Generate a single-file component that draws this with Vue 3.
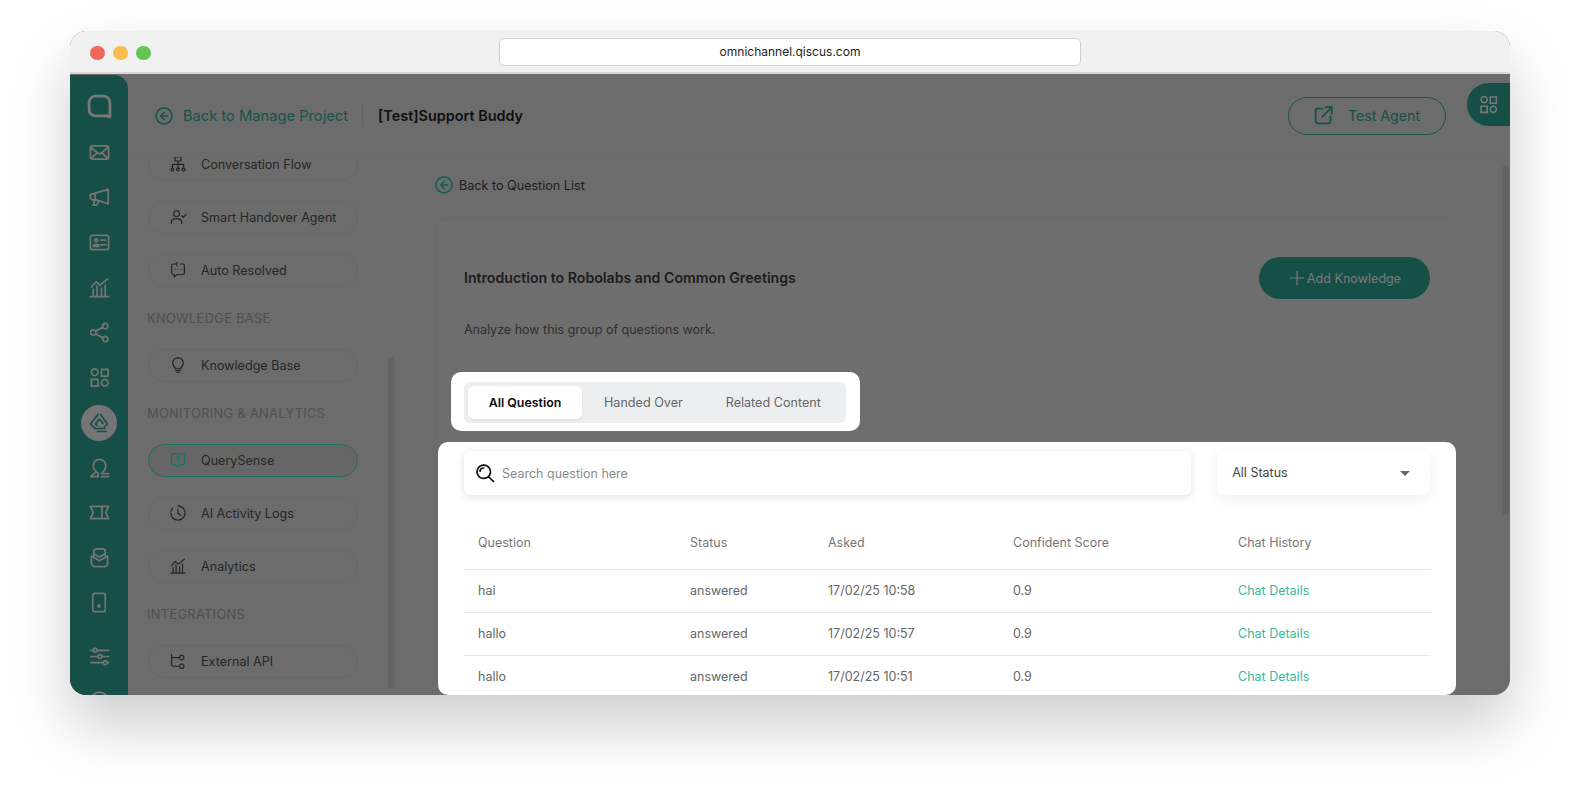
<script setup>
const railIcons = [
  { k: 'mail', d: 'M4.500 5h15a2 2 0 0 1 2 2v10a2 2 0 0 1-2 2h-15a2 2 0 0 1-2-2V7a2 2 0 0 1 2-2zM3 6.500l7 6a3 3 0 0 0 4 0l7-6M3.500 18l6-5.500M20.500 18l-6-5.500' },
  { k: 'megaphone', d: 'M2.500 9 21 3.500V18.500L8.500 14.500H5A2.500 2.500 0 0 1 2.500 12zM7.500 9v5M7 14.500 5.500 20H9l2.500-4.500' },
  { k: 'id', d: 'M4.500 4.500h15a2 2 0 0 1 2 2v11a2 2 0 0 1-2 2h-15a2 2 0 0 1-2-2v-11a2 2 0 0 1 2-2zM8.500 8.200a1.500 1.500 0 1 1-.01 0M5.500 16a3 2 0 0 1 6 0zM13.500 9.500h5M13.500 14.500h5' },
  { k: 'chart', d: 'M2.500 21.500h19M5.500 21v-7M9.500 21V10.500M14 21v-8M18 21V9.500M3.500 11.500l5-5.500 4 3.500 8-6.500' },
  { k: 'share', d: 'M5.500 9.200a2.800 2.800 0 1 1-.01 0M18 2.500a2.800 2.800 0 1 1-.01 0M18 16a2.800 2.800 0 1 1-.01 0M8 10.800l7.700-4.500M8 13.200l7.700 4.500' },
  { k: 'grid', d: 'M7 3a3.500 3.500 0 1 1-.01 0M14 3.500h7v7h-7zM3.500 14h7v7h-7zM17.500 14a3.500 3.500 0 1 1-.01 0' },
  { k: 'robo', active: true, d: 'M11 3.500 3.500 13l4.500 4.500M12 8.500 8.500 13l1.500 1.500M13.500 3.500 20.500 13l-3 3M12.800 8.500 16 12.500M8.500 17.500h9M10.500 20.500h8.500' },
  { k: 'person', d: 'M3 21.500h7.500v-3.500C8 16.500 5.500 14 5.500 10a6.500 6.500 0 0 1 13 0c0 3.500-1.500 5.500-3.500 7M3 21.500c1-2.500 3-3 4.500-4M14 18.500h7.500M14 21.500h7.500' },
  { k: 'ticket', d: 'M2.500 5.500h19L18.500 12l3 6.500h-19l3-6.500zM14.500 5.500v13' },
  { k: 'inbox', d: 'M6 10V6a3 3 0 0 1 3-3h6a3 3 0 0 1 3 3v4M3.500 10.500 12 15.500l8.500-5V18a3.500 3.500 0 0 1-3.500 3.500H7A3.500 3.500 0 0 1 3.500 18zM6 8l6 3.500L18 8' },
  { k: 'phone', d: 'M18 17.500V4.500a2 2 0 0 0-2-2H7a2 2 0 0 0-2 2v15a2 2 0 0 0 2 2h9a2 2 0 0 0 2-2M11.500 14.700a1 1 0 1 1-.01 0' },
  { k: 'sliders', gap: true, d: 'M3 5.500h2.500M9.500 5.500h12M7.500 3.500a2 2 0 1 1-.01 0M3 12h7.500M14.500 12h7M12.500 10a2 2 0 1 1-.01 0M3 18.500h13M20 18.500h1.500M18 16.500a2 2 0 1 1-.01 0' },
  { k: 'help', d: 'M12 2.500a9.500 9.500 0 1 1-.01 0' }
]

const flowIcon = 'M8 2.500h8v5.500H8zM12 8v9M4.500 17v-4.500h15V17M4.500 17.500a1.900 1.900 0 1 1-.01 0M12 17.500a1.900 1.900 0 1 1-.01 0M19.500 17.500a1.900 1.900 0 1 1-.01 0'

const menu = [
  { label: 'Conversation Flow', d: flowIcon },
  { label: 'Smart Handover Agent', d: 'M10 3.500a4 4 0 1 1-.01 0M3 20.500v-1.500a5 5 0 0 1 5-4.500h4a5 5 0 0 1 5 4.500v1.500M17 10.500l2 2 3.500-4' },
  { label: 'Auto Resolved', d: 'M9 4H5.500a2 2 0 0 0-2 2v10a2 2 0 0 0 2 2H7v3l4-3h7.500a2 2 0 0 0 2-2V6a2 2 0 0 0-2-2H15M11 2 9 4l2 2M8 11h.01M12 11h.01M16 11h.01' },
  { title: 'KNOWLEDGE BASE' },
  { label: 'Knowledge Base', d: 'M12 2.500a7 7 0 0 1 4 12.700V17H8v-1.800A7 7 0 0 1 12 2.500zM9 19.500h6M10.500 22h3' },
  { title: 'MONITORING & ANALYTICS' },
  { label: 'QuerySense', active: true, d: 'M5.500 3.500h13a2 2 0 0 1 2 2v11a2 2 0 0 1-2 2H15l-3 3-3-3H5.500a2 2 0 0 1-2-2v-11a2 2 0 0 1 2-2zM9.800 8.800a2.200 2.200 0 1 1 3.400 1.900c-.8.500-1.200 1-1.200 1.800M12 15h.01' },
  { label: 'AI Activity Logs', d: 'M12 2.500a9.500 9.500 0 1 1-9.500 9.500M2.800 9.500A9.500 9.500 0 0 1 5 5.500M12 7v5.500l3.500 2.500' },
  { label: 'Analytics', d: 'M2.500 21.500h19M5.500 21v-7M9.500 21V10.500M14 21v-8M18 21V9.500M3.500 11.500l5-5.500 4 3.500 8-6.500' },
  { title: 'INTEGRATIONS' },
  { label: 'External API', d: 'M3.500 3v14a2 2 0 0 0 2 2H13M3.500 7.500h9.500M17 4.500a3 3 0 1 1-.01 0M17 16a3 3 0 1 1-.01 0' }
]

const rows = [
  { q: 'hai', status: 'answered', asked: '17/02/25 10:58', score: '0.9' },
  { q: 'hallo', status: 'answered', asked: '17/02/25 10:57', score: '0.9' },
  { q: 'hallo', status: 'answered', asked: '17/02/25 10:51', score: '0.9' }
]
const gridIcon = 'M7 3a3.500 3.500 0 1 1-.01 0M14 3.500h7v7h-7zM3.500 14h7v7h-7zM17.500 14a3.500 3.500 0 1 1-.01 0'
const backIcon = 'M12 2.500a9.500 9.500 0 1 1-.01 0M12.500 7.500 8 12l4.500 4.500M8 12h8.500'
</script>

<template>
  <div class="stage">
    <div class="window">
      <div class="titlebar">
        <div class="dots"><i class="dot red"></i><i class="dot yellow"></i><i class="dot green"></i></div>
        <div class="url">omnichannel.qiscus.com</div>
      </div>
      <div class="app">
        <nav class="rail">
          <div class="rail-item first">
            <svg class="logo" viewBox="0 0 24 24"><path d="M8 2h8a6 6 0 0 1 6 6v14l-3-1H8a6 6 0 0 1-6-6V8a6 6 0 0 1 6-6z" /></svg>
          </div>
          <div v-for="ic in railIcons" :key="ic.k" class="rail-item" :class="{ on: ic.active, gap: ic.gap }">
            <svg viewBox="0 0 24 24"><path :d="ic.d" /></svg>
          </div>
        </nav>
        <div class="content">
          <header class="top">
            <a class="back">
              <svg viewBox="0 0 24 24"><path :d="backIcon" /></svg>
              <span>Back to Manage Project</span>
            </a>
            <span class="divider"></span>
            <strong class="crumb">[Test]Support Buddy</strong>
            <button class="test">
              <svg viewBox="0 0 24 24"><path d="M11 4H5.500A2.500 2.500 0 0 0 3 6.500v12A2.500 2.500 0 0 0 5.500 21h12a2.500 2.500 0 0 0 2.500-2.500V13M10.500 13.500 21.500 2.500M14 2.500h7.500V10" /></svg>
              <span>Test Agent</span>
            </button>
            <div class="fab"><svg viewBox="0 0 24 24"><path :d="gridIcon" /></svg></div>
          </header>
          <div class="body">
            <aside class="panel">
              <div class="menu">
                <template v-for="m in menu" :key="m.label || m.title">
                  <div v-if="m.title" class="section">{{ m.title }}</div>
                  <div v-else class="pill" :class="{ active: m.active }">
                    <svg viewBox="0 0 24 24"><path :d="m.d" /></svg>
                    <span>{{ m.label }}</span>
                  </div>
                </template>
              </div>
              <div class="panel-scroll"></div>
            </aside>
            <main class="main">
              <a class="back-list">
                <svg viewBox="0 0 24 24"><path :d="backIcon" /></svg>
                <span>Back to Question List</span>
              </a>
              <section class="card">
                <div class="card-head">
                  <h1>Introduction to Robolabs and Common Greetings</h1>
                  <button class="add">
                    <svg viewBox="0 0 24 24"><path d="M12 3v18M3 12h18" /></svg>
                    <span>Add Knowledge</span>
                  </button>
                </div>
                <p class="sub">Analyze how this group of questions work.</p>
                <div class="tabs-hl">
                  <div class="tabs">
                    <div class="tab on">All Question</div>
                    <div class="tab t2">Handed Over</div>
                    <div class="tab t3">Related Content</div>
                  </div>
                </div>
                <div class="panel-white">
                  <div class="filters">
                    <div class="search">
                      <svg viewBox="0 0 24 24"><path d="M10.500 2.500a8 8 0 1 1-.01 0M16.500 16.500 22 22M6 10a4.500 4.500 0 0 1 4.500-4" /></svg>
                      <span>Search question here</span>
                    </div>
                    <div class="select"><span>All Status</span><i class="caret"></i></div>
                  </div>
                  <table>
                    <thead>
                      <tr><th class="c1">Question</th><th class="c2">Status</th><th class="c3">Asked</th><th class="c4">Confident Score</th><th>Chat History</th></tr>
                    </thead>
                    <tbody>
                      <tr v-for="(r, i) in rows" :key="i">
                        <td>{{ r.q }}</td><td>{{ r.status }}</td><td>{{ r.asked }}</td><td>{{ r.score }}</td><td class="link">Chat Details</td>
                      </tr>
                    </tbody>
                  </table>
                </div>
              </section>
              <div class="main-scroll"></div>
            </main>
          </div>
        </div>
      </div>
    </div>
  </div>
</template>

<style>
html, body { margin: 0; background: #fff; overflow: hidden; }
</style>

<style scoped>
* { box-sizing: border-box; }
.stage { width: 1580px; height: 804px; padding: 31px 70px 0; font-family: Inter, "Liberation Sans", sans-serif; overflow: hidden; background: #fff; }
.window { width: 1440px; height: 664px; border-radius: 16px; overflow: hidden; box-shadow: 0 30px 60px rgba(0,0,0,.2); background: #6c6c6c; display: flex; flex-direction: column; }
.titlebar { height: 43px; flex: none; background: #f1f1f1; border-bottom: 2px solid #d9d9d9; position: relative; display: flex; align-items: center; justify-content: center; }
.dots { position: absolute; left: 20px; top: 14.500px; display: flex; gap: 8.500px; }
.dot { width: 14.500px; height: 14.500px; border-radius: 50%; display: block; }
.red { background: #f2685f; } .yellow { background: #f7bd4f; } .green { background: #62c554; }
.url { width: 582px; height: 28px; margin-top: 1px; background: #fff; border: 1px solid #cfcfcf; border-radius: 5px; text-align: center; font-size: 12px; line-height: 26px; color: #222; }
.app { flex: 1; display: flex; min-height: 0; }
.rail { width: 58px; flex: none; background: #154f47; border-radius: 0 14px 0 14px; margin-top: 1px; padding-top: 9px; display: flex; flex-direction: column; align-items: center; overflow: hidden; position: relative; z-index: 2; }
.rail-item { height: 45px; width: 58px; flex: none; display: flex; align-items: center; justify-content: center; }
.rail-item.first { margin-bottom: 1px; }
.rail-item svg { width: 23px; height: 23px; fill: none; stroke: #757575; stroke-width: 1.800; stroke-linejoin: round; stroke-linecap: round; }
.rail-item .logo { width: 25px; height: 25px; stroke-width: 2.700; stroke: #787878; }
.rail-item.on { position: relative; }
.rail-item.on::before { content: ""; position: absolute; width: 36px; height: 36px; left: 11px; top: 4.500px; border-radius: 50%; background: #757575; }
.rail-item.on svg { position: relative; stroke: #154f47; width: 24px; height: 24px; stroke-width: 1.700; }
.rail-item.gap { margin-top: 9px; }
.content { flex: 1; min-width: 0; display: flex; flex-direction: column; }
.top { height: 83px; flex: none; display: flex; align-items: center; padding-left: 26px; border-bottom: 1px solid #696969; position: relative; padding-top: 0; }
.back { display: flex; align-items: center; gap: 9px; color: #16544a; font-size: 14.700px; width: 208px; margin-top: 1px; }
.back svg { width: 20px; height: 20px; fill: none; stroke: #16544a; stroke-width: 1.800; stroke-linecap: round; stroke-linejoin: round; }
.divider { width: 1px; height: 23px; background: #636363; }
.crumb { margin-left: 15px; font-size: 14.400px; font-weight: 600; color: #0f0f0f; margin-top: 0; }
.test { position: absolute; left: 1160px; top: 23px; width: 158px; height: 38px; border-radius: 19px; border: 1px solid #16544a; background: transparent; display: flex; align-items: center; justify-content: center; gap: 14px; color: #14504a; font: 14.200px Inter, sans-serif; padding: 0 1px 1px 0; }
.test svg { width: 21px; height: 21px; fill: none; stroke: #14504a; stroke-width: 2; stroke-linecap: round; stroke-linejoin: round; }
.fab { position: absolute; right: 0; top: 9px; width: 43px; height: 43px; border-radius: 22px 0 0 22px; background: #154f47; display: flex; align-items: center; justify-content: center; }
.fab svg { width: 21px; height: 21px; fill: none; stroke: #787878; stroke-width: 1.800; }
.body { flex: 1; display: flex; min-height: 0; }
.panel { width: 267px; flex: none; overflow: hidden; position: relative; border-right: 1px solid #6a6a6a; }
.menu { margin-top: -9px; padding-left: 20px; display: flex; flex-direction: column; gap: 20px; }
.section { height: 22px; line-height: 22px; font-size: 12.800px; letter-spacing: .35px; color: #505050; margin-left: -1px; position: relative; top: 1px; white-space: nowrap; }
.pill { width: 210px; height: 33px; flex: none; border-radius: 17px; border: 1px solid #666; display: flex; align-items: center; padding: 0 0 1px 20px; font-size: 12.600px; color: #262626; white-space: nowrap; }
.pill svg { width: 18px; height: 18px; margin-right: 14px; fill: none; stroke: #232323; stroke-width: 1.600; stroke-linecap: round; stroke-linejoin: round; flex: none; }
.pill.active { border-color: #17705f; background: #666; }
.pill.active svg { stroke: #0f7560; }
.panel-scroll { position: absolute; left: 260px; top: 200px; width: 6px; height: 331px; border-radius: 3px; background: #636363; }
.main { flex: 1; min-width: 0; position: relative; padding-left: 43px; }
.back-list { display: flex; align-items: center; gap: 5px; height: 56px; margin-left: -4px; color: #1c1c1c; font-size: 12.600px; }
.back-list svg { width: 20px; height: 20px; fill: none; stroke: #14604f; stroke-width: 1.800; stroke-linecap: round; stroke-linejoin: round; }
.card { margin-top: 8px; width: 1018px; height: 600px; background: #6e6e6e; border-radius: 6px; padding: 36px 26px 0; box-shadow: 0 0 0 1px #6a6a6a; }
.card-head { display: flex; align-items: center; justify-content: space-between; height: 42px; }
h1 { margin: 0 0 2px; font-size: 14.150px; font-weight: 600; color: #1c1c1c; }
.add { width: 171px; height: 42px; border: 0; border-radius: 21px; background: #154f47; color: #7b7b7b; font: 12.600px Inter, sans-serif; display: flex; align-items: center; justify-content: center; gap: 1px; padding: 0; }
.add svg { width: 18px; height: 18px; fill: none; stroke: #7b7b7b; stroke-width: 1.600; stroke-linecap: round; }
.sub { margin: 21px 0 0; height: 20px; line-height: 20px; font-size: 12.500px; color: #2f2f2f; }
.tabs-hl { margin: 32px 0 0 -13px; width: 409px; height: 59px; background: #fff; border-radius: 10px; padding: 10px 13px; }
.tabs { width: 382px; height: 41px; background: #eceef0; border-radius: 6px; padding: 4px; display: flex; align-items: center; font-size: 12.600px; color: #666; }
.tab { height: 33px; line-height: 33px; white-space: nowrap; }
.tab.on { width: 114px; background: #fff; border-radius: 6px; text-align: center; font-weight: 600; font-size: 12.400px; color: #0a0a0a; box-shadow: 0 1px 3px rgba(0,0,0,.08); }
.t2 { margin-left: 22px; }
.t3 { margin-left: 43px; }
.panel-white { margin: 11px -26px 0; height: 253px; background: #fff; border-radius: 10px; padding: 9px 26px 0; }
.filters { display: flex; gap: 26px; height: 44px; }
.search { width: 728px; background: #fff; border-radius: 6px; box-shadow: 0 2px 8px rgba(0,0,0,.12); display: flex; align-items: center; padding-left: 11px; color: #8a8a8a; font-size: 12.500px; gap: 7px; }
.search svg { width: 20px; height: 20px; fill: none; stroke: #111; stroke-width: 2; stroke-linecap: round; }
.select { width: 213px; background: #fff; border-radius: 6px; box-shadow: 0 3px 12px rgba(0,0,0,.07); display: flex; align-items: center; justify-content: space-between; padding: 0 20px 2px 15px; font-size: 12.500px; color: #444; }
.caret { width: 0; height: 0; border-left: 5px solid transparent; border-right: 5px solid transparent; border-top: 5px solid #666; margin-top: 2px; }
table { width: 967px; margin-top: 16px; border-collapse: collapse; table-layout: fixed; font-size: 12.500px; }
th { height: 58px; padding: 6px 0 0 14px; font-weight: 400; color: #777; text-align: left; border-bottom: 1px solid #e4e4e4; }
td { height: 43px; padding: 0 0 0 14px; color: #666; border-bottom: 1px solid #e8e8e8; }
.c1 { width: 212px; } .c2 { width: 138px; } .c3 { width: 185px; } .c4 { width: 225px; }
.link { color: #36b89e; }
.main-scroll { position: absolute; right: 1px; top: 9px; width: 7px; height: 349px; border-radius: 3px; background: #636363; }
</style>
